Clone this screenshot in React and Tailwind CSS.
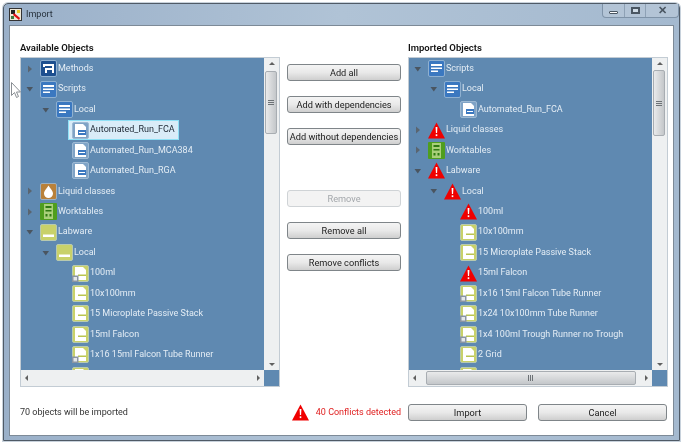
import React from 'react';

const FONT = 'font-["Roboto","Noto_Sans",sans-serif]';

const Methods = () => (
    <svg width="17" height="17" viewBox="0 0 17 17">
        <rect x="0.5" y="0.5" width="16" height="16" rx="1.5" fill="#1d4f8f" stroke="#8fb0d0" />
        <path d="M3 4h11v9h-2V6H5v1H3z" fill="#fff" />
        <path d="M5 8h7v5H5z" fill="#fff" />
        <path d="M7 10h5v3H7z" fill="#1d4f8f" />
    </svg>
);

const Scripts = () => (
    <svg width="17" height="17" viewBox="0 0 17 17">
        <rect x="0.5" y="0.5" width="16" height="16" rx="1.5" fill="#3b78c0" stroke="#8fb0d0" />
        <path d="M3 4h11v2H3zM3 7.5h11v1.5H3zM3 10.5h7V12H3z" fill="#fff" />
    </svg>
);

const ScriptFile = () => (
    <svg width="17" height="17" viewBox="0 0 17 17">
        <rect x="0.5" y="0.5" width="16" height="16" rx="1.5" fill="#7fa3c6" stroke="#9db9d3" />
        <path d="M3 2h8l3 3v10H3z" fill="#fff" />
        <path d="M6 8h8v5H6z" fill="#3b78c0" />
        <path d="M7 10h6v1H7z" fill="#fff" />
    </svg>
);

const Liquid = () => (
    <svg width="17" height="17" viewBox="0 0 17 17">
        <rect x="0.5" y="0.5" width="16" height="16" rx="1.5" fill="#b9813a" stroke="#9db0c0" />
        <path d="M8.5 2.5C10 5.5 13 7.5 13 10.5a4.5 4.5 0 0 1-9 0c0-3 3-5 4.5-8z" fill="#fff" />
    </svg>
);

const Worktable = () => (
    <svg width="17" height="17" viewBox="0 0 17 17">
        <rect x="0" y="0" width="17" height="17" rx="1" fill="#4f9e1e" />
        <path d="M4 1h9v15H4z" fill="#a9cf7a" />
        <path d="M5.5 3h6v2h-6zM5.5 7h6v1.5h-6zM5.5 11h2v2.5h-2zM9.5 11h2v2.5h-2z" fill="#2f7a12" />
    </svg>
);

const Labware = () => (
    <svg width="17" height="17" viewBox="0 0 17 17">
        <rect x="0.5" y="0.5" width="16" height="16" rx="1.5" fill="#c8d16a" stroke="#b7c9b0" />
        <path d="M3 10.5h11V13H3z" fill="#fff" />
    </svg>
);

const LabFile = ({ tagged }) => (
    <svg width="17" height="17" viewBox="0 0 17 17">
        <rect x="0.5" y="0.5" width="16" height="16" rx="1.5" fill="#c8d16a" stroke="#b7c9b0" />
        <path d="M3 2h8l3 3v10H3z" fill="#fff" />
        <path d="M6 9.5h8V11H6z" fill="#b9c44f" />
        {tagged ? (
            <g>
                <rect x="0" y="10.5" width="6.5" height="6.5" fill="#8a95a3" />
                <rect x="1.5" y="12" width="3.5" height="3.5" fill="#e4e7ea" />
            </g>
        ) : null}
    </svg>
);

const Warning = () => (
    <svg className="shrink-0" width="17" height="17" viewBox="0 0 17 17">
        <path d="M8.5 0.5L17 16.5H0z" fill="#f00000" />
        <path d="M7.6 5h1.8l-.3 6H7.9z" fill="#fff" />
        <rect x="7.7" y="12.3" width="1.6" height="1.8" fill="#fff" />
    </svg>
);

const ICONS = {
    methods: <Methods />,
    scripts: <Scripts />,
    file: <ScriptFile />,
    liquid: <Liquid />,
    worktable: <Worktable />,
    labware: <Labware />,
    lab: <LabFile />,
    labTag: <LabFile tagged />,
    warn: <Warning />,
};

const AVAILABLE = [
    { depth: 0, arrow: 'right', icon: 'methods', label: 'Methods' },
    { depth: 0, arrow: 'down', icon: 'scripts', label: 'Scripts' },
    { depth: 1, arrow: 'down', icon: 'scripts', label: 'Local' },
    { depth: 2, icon: 'file', label: 'Automated_Run_FCA', selected: true },
    { depth: 2, icon: 'file', label: 'Automated_Run_MCA384' },
    { depth: 2, icon: 'file', label: 'Automated_Run_RGA' },
    { depth: 0, arrow: 'right', icon: 'liquid', label: 'Liquid classes' },
    { depth: 0, arrow: 'right', icon: 'worktable', label: 'Worktables' },
    { depth: 0, arrow: 'down', icon: 'labware', label: 'Labware' },
    { depth: 1, arrow: 'down', icon: 'labware', label: 'Local' },
    { depth: 2, icon: 'labTag', label: '100ml' },
    { depth: 2, icon: 'lab', label: '10x100mm' },
    { depth: 2, icon: 'lab', label: '15 Microplate Passive Stack' },
    { depth: 2, icon: 'lab', label: '15ml Falcon' },
    { depth: 2, icon: 'labTag', label: '1x16 15ml Falcon Tube Runner' },
    { depth: 2, icon: 'lab', label: '' },
];

const IMPORTED = [
    { depth: 0, arrow: 'down', icon: 'scripts', label: 'Scripts' },
    { depth: 1, arrow: 'down', icon: 'scripts', label: 'Local' },
    { depth: 2, icon: 'file', label: 'Automated_Run_FCA' },
    { depth: 0, arrow: 'right', icon: 'warn', label: 'Liquid classes' },
    { depth: 0, arrow: 'right', icon: 'worktable', label: 'Worktables' },
    { depth: 0, arrow: 'down', icon: 'warn', label: 'Labware' },
    { depth: 1, arrow: 'down', icon: 'warn', label: 'Local' },
    { depth: 2, icon: 'warn', label: '100ml' },
    { depth: 2, icon: 'lab', label: '10x100mm' },
    { depth: 2, icon: 'lab', label: '15 Microplate Passive Stack' },
    { depth: 2, icon: 'warn', label: '15ml Falcon' },
    { depth: 2, icon: 'labTag', label: '1x16 15ml Falcon Tube Runner' },
    { depth: 2, icon: 'labTag', label: '1x24 10x100mm Tube Runner' },
    { depth: 2, icon: 'labTag', label: '1x4 100ml Trough Runner no Trough' },
    { depth: 2, icon: 'lab', label: '2 Grid' },
    { depth: 2, icon: 'lab', label: '' },
];

const DEPTH_PADDING = ['pl-0', 'pl-[16px]', 'pl-[32px]'];

const Arrow = ({ kind }) => {
    if (!kind) return <span className="w-[19px] shrink-0" />;
    return (
        <svg className="ml-[1px] mr-[2px] shrink-0" width="16" height="10" viewBox="0 0 16 10">
            {kind === 'right'
                ? <path d="M6 1.5l4 3.5-4 3.5z" fill="#5a6570" />
                : <path d="M4.5 3h6.5L7.8 7.5z" fill="#4a5560" />}
        </svg>
    );
};

const TreeRow = ({ row }) => (
    <div className={`flex h-[20.45px] shrink-0 items-center whitespace-nowrap ${DEPTH_PADDING[row.depth]}`}>
        <Arrow kind={row.arrow} />
        <span className={row.selected
            ? 'ml-[-4px] flex h-[20px] items-center border border-[#8fe0f5] bg-[#d9ecf8] pl-[3px] pr-[3px] text-[#1d2733]'
            : 'flex items-center text-[#e4edf5]'}
        >
            <span className="flex shrink-0">{ICONS[row.icon]}</span>
            <span className="ml-[1px]">{row.label}</span>
        </span>
    </div>
);

const Grip = ({ vertical }) => (
    <span className={vertical ? 'flex flex-col gap-[1px]' : 'flex gap-[1px]'}>
        <span className={`bg-[#6d7276] ${vertical ? 'h-px w-[6px]' : 'h-[6px] w-px'}`} />
        <span className={`bg-[#6d7276] ${vertical ? 'h-px w-[6px]' : 'h-[6px] w-px'}`} />
        <span className={`bg-[#6d7276] ${vertical ? 'h-px w-[6px]' : 'h-[6px] w-px'}`} />
    </span>
);

const VerticalBar = ({ thumbTop, thumbHeight }) => (
    <div className="relative flex w-[15px] shrink-0 flex-col items-center justify-between bg-[#eef0f1] py-[4px]">
        <span className="h-0 w-0 border-x-[3px] border-b-[3px] border-x-transparent border-b-[#606060]" />
        <span className="h-0 w-0 border-x-[3px] border-t-[3px] border-x-transparent border-t-[#606060]" />
        <span
            className="absolute left-[1px] flex w-[12px] items-center justify-center rounded-[2px] border border-[#a8adb2] bg-gradient-to-r from-[#e9eaeb] to-[#c4c7ca]"
            style={{ top: thumbTop, height: thumbHeight }}
        >
            <Grip vertical />
        </span>
    </div>
);

const HorizontalBar = ({ thumb }) => (
    <div className="flex h-[16px] items-stretch">
        <div className="flex flex-1 items-center justify-between bg-[#eef0f1] px-[4px]">
            <span className="h-0 w-0 border-y-[3px] border-r-[3px] border-y-transparent border-r-[#606060]" />
            {thumb ? (
                <span className="flex h-[14px] w-[210px] items-center justify-center rounded-[2px] border border-[#a8adb2] bg-gradient-to-b from-[#e9eaeb] to-[#c4c7ca]">
                    <Grip />
                </span>
            ) : null}
            <span className="h-0 w-0 border-y-[3px] border-l-[3px] border-y-transparent border-l-[#606060]" />
        </div>
        <div className="w-[15px] bg-[#5f89b1]" />
    </div>
);

const Tree = ({ rows, thumbTop, thumbHeight, thumb }) => (
    <div className="flex h-[330px] flex-col border border-[#c3ccd4] bg-white">
        <div className="flex min-h-0 flex-1">
            <div className="flex min-w-0 flex-1 flex-col overflow-hidden bg-[#5f89b1] pt-[0.5px]">
                {rows.map((row, i) => <TreeRow key={i} row={row} />)}
            </div>
            <VerticalBar thumbTop={thumbTop} thumbHeight={thumbHeight} />
        </div>
        <HorizontalBar thumb={thumb} />
    </div>
);

const Button = ({ children, disabled, className = '' }) => (
    <button
        type="button"
        disabled={disabled}
        className={`flex h-[17px] items-center justify-center whitespace-nowrap rounded-[3px] border text-[9.2px] leading-none ${disabled
            ? 'border-[#cfd3d6] bg-[#f3f3f3] text-[#a3a7ab]'
            : 'border-[#7f8589] bg-gradient-to-b from-[#f4f4f4] via-[#e9e9e9] to-[#cfcfcf] text-[#202020]'} ${className}`}
    >
        {children}
    </button>
);

export default function App() {
    return (
        <div className={`relative h-[448px] w-[688px] overflow-hidden bg-white pl-[3px] pt-[3px] text-[9px] ${FONT} blur-[0.35px]`}>
            <div className="flex h-[438px] w-[677px] flex-col rounded-t-[5px] border border-[#4f5a66] bg-gradient-to-r from-[#9ab0c9] via-[#b0c3d6] to-[#a4b9cf] shadow-[0_0_0_1px_#c8d2dc]">
                <div className="flex h-[21px] shrink-0 items-start justify-between pl-[5px]">
                    <div className="flex items-center gap-[4px] pt-[4px]">
                        <svg width="13" height="13" viewBox="0 0 13 13">
                            <rect x="0.5" y="0.5" width="12" height="12" fill="#efe9d8" stroke="#333" />
                            <rect x="2" y="2" width="4" height="4" fill="#222" />
                            <path d="M5 5l6 5-1 2-6-5z" fill="#e01010" />
                            <rect x="8" y="2" width="3" height="3" fill="#e8c820" />
                            <rect x="2" y="8" width="3" height="3" fill="#3a7a3a" />
                        </svg>
                        <span className="text-[9px] leading-none text-[#27323d]">Import</span>
                    </div>
                    <div className="flex h-[14px] w-[77px] rounded-b-[4px] border border-t-0 border-[#7f93a8] bg-[#b3c4d6]">
                        <div className="flex w-[22px] items-end justify-center border-r border-[#8ea1b5] pb-[3px]">
                            <span className="h-[3px] w-[9px] rounded-[1px] border border-[#4a5662] bg-white" />
                        </div>
                        <div className="flex w-[21px] items-center justify-center border-r border-[#8ea1b5]">
                            <span className="h-[7px] w-[9px] border-2 border-[#4a5662] bg-[#cfdbe6]" />
                        </div>
                        <div className="flex flex-1 items-center justify-center text-[11px] font-bold leading-none text-[#4a5662]">✕</div>
                    </div>
                </div>
                <div className="mx-[5px] mb-[4px] min-h-0 flex-1 border border-[#7d8a97] bg-white pl-[10px] pt-[12px]">
                    <div className="grid grid-cols-[260px_114px_260px] gap-x-[7px]">
                        <div>
                            <div className="h-[19px] text-[9.5px] font-semibold leading-[19px] text-[#111]">Available Objects</div>
                            <Tree rows={AVAILABLE} thumbTop={13} thumbHeight={63} />
                        </div>
                        <div className="flex flex-col pt-[26px]">
                            <div className="flex flex-col gap-[15px]">
                                <Button>Add all</Button>
                                <Button>Add with dependencies</Button>
                                <Button>Add without dependencies</Button>
                            </div>
                            <div className="mt-[45px] flex flex-col gap-[15px]">
                                <Button disabled>Remove</Button>
                                <Button>Remove all</Button>
                                <Button>Remove conflicts</Button>
                            </div>
                        </div>
                        <div>
                            <div className="h-[19px] text-[9.5px] font-semibold leading-[19px] text-[#111]">Imported Objects</div>
                            <Tree rows={IMPORTED} thumbTop={12} thumbHeight={66} thumb />
                        </div>
                    </div>
                    <div className="mt-[17px] grid h-[16px] grid-cols-[260px_114px_260px] items-center gap-x-[7px]">
                        <div className="text-[#333]">70 objects will be imported</div>
                        <div className="flex items-center justify-end gap-[7px] whitespace-nowrap text-[#e02020]">
                            <Warning />
                            <span>40 Conflicts detected</span>
                        </div>
                        <div className="flex gap-[11px]">
                            <Button className="w-[119px]">Import</Button>
                            <Button className="w-[129px]">Cancel</Button>
                        </div>
                    </div>
                </div>
            </div>
            <svg className="absolute left-[11px] top-[82px]" width="11" height="17" viewBox="0 0 11 17">
                <path d="M0.5 0.5v13l3-3 2 5 2-1-2-4.5h4z" fill="#fff" stroke="#8a8f94" />
            </svg>
        </div>
    );
}
